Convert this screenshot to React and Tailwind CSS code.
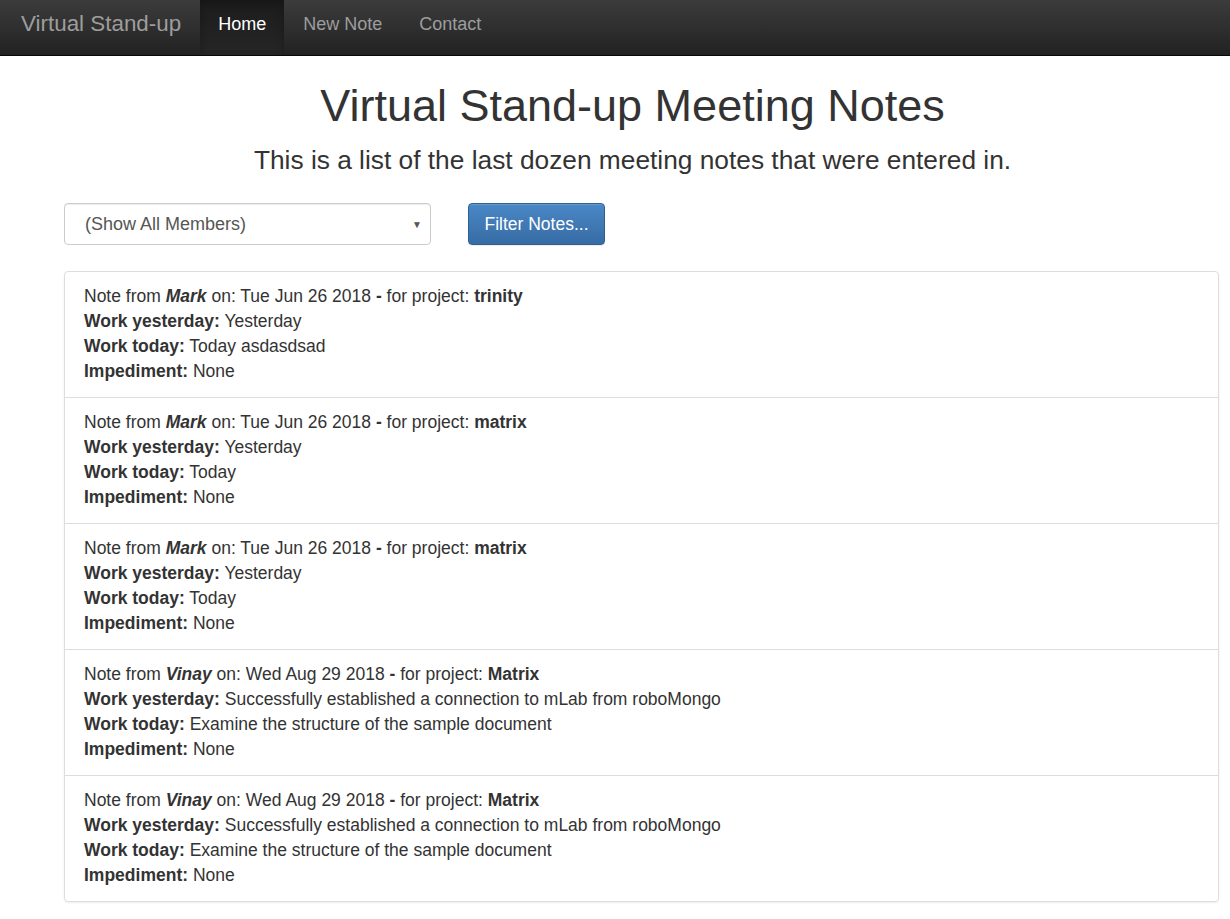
import { useState } from 'react';

const notes = [
  { name: 'Mark', date: 'Tue Jun 26 2018', project: 'trinity', yesterday: 'Yesterday', today: 'Today asdasdsad', impediment: 'None' },
  { name: 'Mark', date: 'Tue Jun 26 2018', project: 'matrix', yesterday: 'Yesterday', today: 'Today', impediment: 'None' },
  { name: 'Mark', date: 'Tue Jun 26 2018', project: 'matrix', yesterday: 'Yesterday', today: 'Today', impediment: 'None' },
  { name: 'Vinay', date: 'Wed Aug 29 2018', project: 'Matrix', yesterday: 'Successfully established a connection to mLab from roboMongo', today: 'Examine the structure of the sample document', impediment: 'None' },
  { name: 'Vinay', date: 'Wed Aug 29 2018', project: 'Matrix', yesterday: 'Successfully established a connection to mLab from roboMongo', today: 'Examine the structure of the sample document', impediment: 'None' },
];

const App = () => {
  const [member, setMember] = useState('all');

  return (
    <div className="min-h-screen bg-white text-[#333] font-['Liberation_Sans',Arial,sans-serif]">
      <nav className="h-14 flex items-stretch bg-gradient-to-b from-[#3c3c3c] to-[#222] border-b border-[#080808]">
        <a className="block pt-[13px] pl-[21px] pr-[19px] text-[22.4px] leading-[22px] text-[#9d9d9d]">Virtual Stand-up</a>
        <a className="block pt-[14px] px-[18px] text-[18px] leading-[20px] text-white bg-gradient-to-b from-[#1c1c1c] to-[#262626] shadow-[inset_0_3px_9px_rgba(0,0,0,0.25)]">Home</a>
        <a className="block pt-[14px] px-[19px] text-[18px] leading-[20px] text-[#9d9d9d]">New Note</a>
        <a className="block pt-[14px] px-[18px] text-[18px] leading-[20px] text-[#9d9d9d]">Contact</a>
      </nav>

      <div className="pl-[35px]">
        <h1 className="text-center text-[45px] leading-[54px] pt-[23px] mb-[10px]">Virtual Stand-up Meeting Notes</h1>
        <p className="text-center text-[26.3px] leading-[34px]">This is a list of the last dozen meeting notes that were entered in.</p>
      </div>

      <div className="pl-[64px] pr-[11px]">
        <div className="flex items-center gap-[37px] mt-[26px]">
          <div className="relative w-[367px] h-[42px]">
            <select
              value={member}
              onChange={(e) => setMember(e.target.value)}
              className="appearance-none w-full h-full rounded-[4px] border border-[#ccc] bg-white pl-[20px] text-[18px] text-[#555] shadow-[inset_0_1px_1px_rgba(0,0,0,0.075)]"
            >
              <option value="all">(Show All Members)</option>
              <option value="mark">Mark</option>
              <option value="vinay">Vinay</option>
            </select>
            <span className="absolute right-[9px] top-[14px] text-[10px] text-[#555] pointer-events-none">▼</span>
          </div>
          <button className="h-[42px] w-[137px] rounded-[4px] border border-[#2e6094] bg-gradient-to-b from-[#4a88c6] to-[#376ca4] text-white text-[17.5px] shadow-[inset_0_1px_0_rgba(255,255,255,0.15),0_1px_1px_rgba(0,0,0,0.075)]">
            Filter Notes...
          </button>
        </div>

        <div className="mt-[26px] rounded-[4px] border border-[#ddd] shadow-[0_1px_2px_rgba(0,0,0,0.075)]">
          {notes.map((n, i) => (
            <div key={i} className={`px-[19px] pt-[12px] pb-[13px] text-[17.5px] leading-[25px] ${i > 0 ? 'border-t border-[#ddd]' : ''}`}>
              <div>Note from <b><i>{n.name}</i></b> on: {n.date} <b>-</b> for project: <b>{n.project}</b></div>
              <div><b>Work yesterday:</b> {n.yesterday}</div>
              <div><b>Work today:</b> {n.today}</div>
              <div><b>Impediment:</b> {n.impediment}</div>
            </div>
          ))}
        </div>
      </div>
    </div>
  );
};

export default App;
